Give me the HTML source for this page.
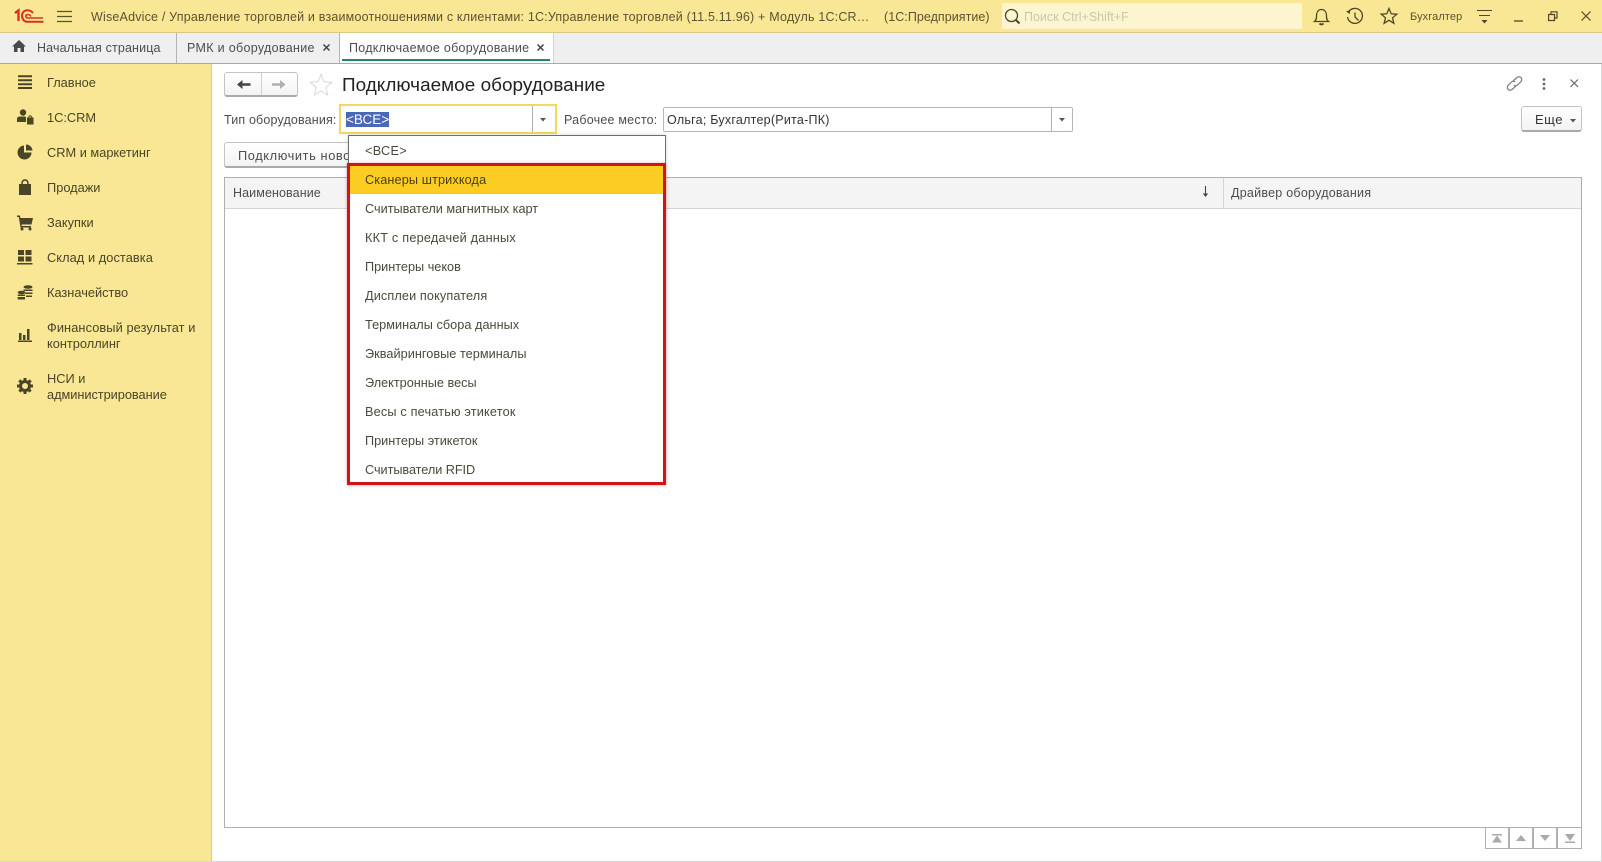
<!DOCTYPE html>
<html lang="ru"><head><meta charset="utf-8"><title>Подключаемое оборудование</title>
<style>
html,body{margin:0;padding:0;width:1602px;height:862px;overflow:hidden;background:#fff;font-family:"Liberation Sans","Noto Sans CJK SC",sans-serif;font-size:13px;color:#4d4d4d}
.a{position:absolute}
.t{position:absolute;white-space:nowrap;line-height:16px}
svg{position:absolute;overflow:visible}
.s{color:#4a4526;font-size:12.800px}
.it{position:absolute;left:365px;white-space:nowrap;line-height:16px;color:#4a4a3a;font-size:12.700px}
.btn{position:absolute;background:linear-gradient(#fff,#f3f3f3);border:1px solid #c4c4c4;border-bottom:2px solid #aaa;border-radius:3px;box-sizing:border-box}
.pg{position:absolute;top:827px;width:24px;height:22px;box-sizing:border-box;border:1px solid #b0b0b0}
</style></head><body>

<!-- title bar -->
<div class="a" style="left:0;top:0;width:1602px;height:32px;background:#f9e795;border-bottom:1px solid #d8c98a"></div>
<svg style="left:14px;top:9px" width="30" height="15" viewBox="0 0 30 15"><g fill="none" stroke="#d6331e"><path d="M1 4 4.500 1.500V12" stroke-width="2.400"/><path d="M19 4C17.500 2.200 15.800 1.200 13.500 1.200 10 1.200 8 3.800 8 6.800S10 12.800 13.500 12.800H29.500" stroke-width="2"/><path d="M17 7.500C16.300 6.300 15.200 5.500 13.800 5.500 12.500 5.500 11.800 6.200 11.800 7S12.500 9 13.800 9H29" stroke-width="1.600"/></g></svg>
<svg style="left:57px;top:10px" width="15" height="13"><path d="M0 1.500H15M0 6.500H15M0 11.500H15" stroke="#5a5330" stroke-width="1.200"/></svg>
<div class="t" style="left:91px;top:9px;color:#5b5431;font-size:12.500px;letter-spacing:.19px">WiseAdvice / Управление торговлей и взаимоотношениями с клиентами: 1С:Управление торговлей (11.5.11.96) + Модуль 1С:CR…</div>
<div class="t" style="left:884px;top:9px;color:#5b5431;font-size:12.500px;letter-spacing:.05px">(1С:Предприятие)</div>
<div class="a" style="left:1002px;top:3px;width:300px;height:26px;background:#fdf5cf"></div>
<svg style="left:1004px;top:8px" width="17" height="18" fill="none" stroke="#4b4630" stroke-width="1.300"><circle cx="7.500" cy="7.500" r="6"/><path d="M12 12l3.500 3.500" stroke-width="2"/></svg>
<div class="t" style="left:1024px;top:9px;color:#c9c6b2;font-size:12.500px">Поиск Ctrl+Shift+F</div>
<svg style="left:1313px;top:7px" width="17" height="19" fill="none" stroke="#4f4823" stroke-width="1.300"><path d="M1.500 14.500C3.500 13 3.500 11 3.500 9 3.500 5.500 5 2.500 8.500 2.500S13.500 5.500 13.500 9C13.500 11 13.500 13 15.500 14.500Z"/><path d="M6.500 16.500Q8.500 18.500 10.500 16.500" stroke-width="1.800"/></svg>
<svg style="left:1345px;top:7px" width="19" height="19" fill="none" stroke="#4f4823" stroke-width="1.300"><path d="M3.500 5A7.500 7.500 0 1 1 2.500 10"/><path d="M1 4.500 5 3 5 7Z" fill="#4f4823" stroke="none"/><path d="M10 5.500V10L13.500 13.500"/></svg>
<svg style="left:1380px;top:7px" width="18" height="18" fill="none" stroke="#4f4823" stroke-width="1.300"><path d="M9 1.500 11.200 6.800 16.800 7.200 12.500 10.800 13.900 16.300 9 13.300 4.100 16.300 5.500 10.800 1.200 7.200 6.800 6.800Z"/></svg>
<div class="t" style="left:1410px;top:9px;color:#5b5431;font-size:11px;letter-spacing:.1px">Бухгалтер</div>
<svg style="left:1477px;top:10px" width="15" height="15" fill="none" stroke="#4f4823" stroke-width="1.100"><path d="M0 .5H15M2 5.500H13"/><path d="M4.500 10H10.500L7.500 13.500Z" fill="#4f4823" stroke="none"/></svg>
<svg style="left:1514px;top:20px" width="9" height="2"><path d="M0 1H9" stroke="#4f4823" stroke-width="1.300"/></svg>
<svg style="left:1548px;top:11px" width="10" height="11" fill="none" stroke="#4f4823" stroke-width="1.200"><path d="M.6 3.500H6.500V9.500H.6ZM3 3.500V.8H9V7H6.500"/></svg>
<svg style="left:1581px;top:11px" width="10" height="10"><path d="M.5.500 9.500 9.500M9.500.500.500 9.500" stroke="#4f4823" stroke-width="1.200"/></svg>

<!-- tabs -->
<div class="a" style="left:0;top:33px;width:1602px;height:30px;background:#efefef;border-bottom:1px solid #a9a9a9"></div>
<div class="a" style="left:176px;top:33px;width:1px;height:30px;background:#b5b5b5"></div>
<div class="a" style="left:339px;top:33px;width:215px;height:30px;background:#fff;border-left:1px solid #b5b5b5;border-right:1px solid #d4d4d4;box-sizing:border-box"></div>
<div class="a" style="left:342px;top:59px;width:208px;height:2px;background:#1f8a66"></div>
<svg style="left:12px;top:40px" width="14" height="12"><path d="M7 0 14 6.500H12V12H8.500V8H5.500V12H2V6.500H0Z" fill="#4a4a4a"/></svg>
<div class="t" style="left:37px;top:40px;font-size:12.500px;letter-spacing:.15px">Начальная страница</div>
<div class="t" style="left:187px;top:40px;font-size:12.500px;letter-spacing:.32px">РМК и оборудование</div>
<svg style="left:323px;top:44px" width="7" height="7"><path d="M.5.500 6.500 6.500M6.500.500.500 6.500" stroke="#444" stroke-width="1.500"/></svg>
<div class="t" style="left:349px;top:40px;font-size:12.500px;letter-spacing:.27px">Подключаемое оборудование</div>
<svg style="left:537px;top:44px" width="7" height="7"><path d="M.5.500 6.500 6.500M6.500.500.500 6.500" stroke="#444" stroke-width="1.500"/></svg>

<!-- sidebar -->
<div class="a" style="left:0;top:64px;width:212px;height:798px;background:#f9e795;border-right:1px solid #d8cc8c;box-sizing:border-box"></div>
<svg style="left:17px;top:75px" width="16" height="14"><path d="M1 1.200H15M1 5.200H15M1 9.200H15M1 13H15" stroke="#4a4526" stroke-width="2"/></svg>
<svg style="left:17px;top:109px" width="17" height="16" fill="#4a4526"><circle cx="6" cy="3.500" r="3.200"/><path d="M0 13V10Q0 7.500 3 7.500H8Q9 7.500 9 9V13Z"/><path d="M10 8.500H16.500V15.500H10Z"/><path d="M11.500 8.500Q13 5 15 8.500" fill="none" stroke="#4a4526"/></svg>
<svg style="left:17px;top:144px" width="16" height="16" fill="#4a4526"><path d="M7 1.500V8.500H14.500A7 7 0 1 1 7 1.500Z"/><path d="M9 .5A6.500 6.500 0 0 1 15.500 6.500H9Z"/></svg>
<svg style="left:18px;top:179px" width="14" height="16" fill="#4a4526"><path d="M1 5H13V16H1Z"/><path d="M4 5Q4 1 7 1T10 5" fill="none" stroke="#4a4526" stroke-width="1.500"/></svg>
<svg style="left:17px;top:215px" width="16" height="15" fill="#4a4526"><path d="M0 .5H3L3.500 3H16L14.500 9.500H4.500L4.800 11H14V12.500H3.500L1.800 2H0Z"/><circle cx="5" cy="14" r="1.500"/><circle cx="13" cy="14" r="1.500"/></svg>
<svg style="left:17px;top:250px" width="16" height="15" fill="#4a4526"><path d="M1 0H7V5H1ZM8.500 0H14.500V5H8.500ZM1 6.500H7V11.500H1ZM8.500 6.500H14.500V11.500H8.500ZM0 13H15.500V14.500H0Z"/></svg>
<svg style="left:17px;top:285px" width="16" height="15" fill="#4a4526"><ellipse cx="11" cy="2" rx="4.500" ry="1.800"/><path d="M6.500 4.500H15.500V6H6.500ZM8 7.500H15.500V9H8ZM9 10.500H15V12H9Z"/><ellipse cx="4.500" cy="7.500" rx="3.800" ry="1.700"/><path d="M.700 9.500H8V11H.700ZM.700 12H8V14.500H.700Z"/></svg>
<svg style="left:18px;top:329px" width="14" height="13" fill="#4a4526"><path d="M1 4H3.500V11H1ZM5 6H7.500V11H5ZM9 0H11.500V11H9ZM0 11.500H14V13H0Z"/></svg>
<svg style="left:17px;top:378px" width="16" height="16"><circle cx="8" cy="8" r="4.500" fill="none" stroke="#4a4526" stroke-width="3"/><path d="M8 0V16M0 8H16M2.300 2.300 13.700 13.700M13.700 2.300 2.300 13.700" stroke="#4a4526" stroke-width="3" stroke-dasharray="2.500 11 2.500"/></svg>
<div class="t s" style="left:47px;top:75px">Главное</div>
<div class="t s" style="left:47px;top:110px">1С:CRM</div>
<div class="t s" style="left:47px;top:145px">CRM и маркетинг</div>
<div class="t s" style="left:47px;top:180px">Продажи</div>
<div class="t s" style="left:47px;top:215px">Закупки</div>
<div class="t s" style="left:47px;top:250px;letter-spacing:.06px">Склад и доставка</div>
<div class="t s" style="left:47px;top:285px">Казначейство</div>
<div class="t s" style="left:47px;top:320px;letter-spacing:.09px">Финансовый результат и</div>
<div class="t s" style="left:47px;top:336px">контроллинг</div>
<div class="t s" style="left:47px;top:371px">НСИ и</div>
<div class="t s" style="left:47px;top:387px;letter-spacing:-.05px">администрирование</div>

<!-- form header -->
<div class="btn" style="left:224px;top:72px;width:74px;height:25px"></div>
<div class="a" style="left:261px;top:73px;width:1px;height:22px;background:#d0d0d0"></div>
<svg style="left:236px;top:79px" width="15" height="11"><path d="M1 5.500 6.500 1V4.300H14.500V6.700H6.500V10Z" fill="#444"/></svg>
<svg style="left:271px;top:79px" width="15" height="11"><path d="M14.500 5.500 9 1V4.300H1V6.700H9V10Z" fill="#b0b0b0"/></svg>
<svg style="left:309px;top:73px" width="24" height="23"><path d="M12 1.500 15 8.800 22.800 9.300 16.800 14.300 18.700 22 12 17.800 5.300 22 7.200 14.300 1.200 9.300 9 8.800Z" fill="#fff" stroke="#d8d8d8" stroke-width="1"/></svg>
<div class="t" style="left:342px;top:75px;font-size:18.900px;line-height:22px;color:#222;letter-spacing:.04px">Подключаемое оборудование</div>
<svg style="left:1506px;top:75px" width="17" height="17" fill="none" stroke="#7d7d7d" stroke-width="1.200"><path d="M7 6 11 2.500Q13 1 14.800 2.500T15 6.500L11.500 10Q9.500 11.500 8 10"/><path d="M10 11 6 14.500Q4 16 2.300 14.500T2 10.500L5.500 7Q7.500 5.500 9 7"/></svg>
<svg style="left:1542px;top:78px" width="4" height="12" fill="#666"><circle cx="2" cy="1.500" r="1.400"/><circle cx="2" cy="6" r="1.400"/><circle cx="2" cy="10.500" r="1.400"/></svg>
<svg style="left:1570px;top:79px" width="9" height="9"><path d="M.5.500 8 8M8 .5.500 8" stroke="#666" stroke-width="1.200"/></svg>

<!-- filters -->
<div class="t" style="left:224px;top:112px;letter-spacing:.16px;font-size:12.500px">Тип оборудования:</div>
<div class="a" style="left:339px;top:104px;width:218px;height:30px;border:2px solid #f5d75e;box-sizing:border-box;background:#fff"></div>
<div class="a" style="left:532px;top:106px;width:1px;height:26px;background:#b0b0b0"></div>
<svg style="left:540px;top:118px" width="6" height="4"><path d="M0 0H6L3 3.500Z" fill="#555"/></svg>
<div class="a" style="left:346px;top:112px;width:43px;height:15px;background:#4a68b8"></div>
<div class="t" style="left:346px;top:112px;color:#fff;font-size:13.500px">&lt;ВСЕ&gt;</div>
<div class="t" style="left:564px;top:112px;letter-spacing:.22px;font-size:12.500px">Рабочее место:</div>
<div class="a" style="left:663px;top:107px;width:410px;height:25px;border:1px solid #b5b5b5;border-radius:2px;box-sizing:border-box;background:#fff"></div>
<div class="a" style="left:1051px;top:108px;width:1px;height:23px;background:#b0b0b0"></div>
<svg style="left:1059px;top:118px" width="6" height="4"><path d="M0 0H6L3 3.500Z" fill="#555"/></svg>
<div class="t" style="left:667px;top:112px;color:#333;font-size:12.500px;letter-spacing:.24px">Ольга; Бухгалтер(Рита-ПК)</div>
<div class="btn" style="left:1521px;top:106px;width:61px;height:26px"></div>
<div class="t" style="left:1535px;top:112px;color:#333;letter-spacing:.5px">Еще</div>
<svg style="left:1570px;top:119px" width="6" height="4"><path d="M0 0H6L3 3.500Z" fill="#555"/></svg>
<div class="btn" style="left:224px;top:142px;width:140px;height:26px"></div>
<div class="t" style="left:238px;top:148px;letter-spacing:.6px;font-size:12.800px;width:110px;overflow:hidden">Подключить новое</div>

<!-- table -->
<div class="a" style="left:224px;top:177px;width:1358px;height:651px;border:1px solid #b0b0b0;box-sizing:border-box;background:#fff"></div>
<div class="a" style="left:225px;top:178px;width:1356px;height:31px;background:#f5f4f5;border-bottom:1px solid #d4d4d4;box-sizing:border-box"></div>
<div class="a" style="left:1223px;top:178px;width:1px;height:30px;background:#d4d4d4"></div>
<div class="t" style="left:233px;top:185px;letter-spacing:.1px;font-size:12.500px">Наименование</div>
<div class="t" style="left:1231px;top:185px;letter-spacing:.25px;font-size:12.500px">Драйвер оборудования</div>
<svg style="left:1202px;top:186px" width="7" height="12"><path d="M3.500 0V10" stroke="#444" stroke-width="1.100"/><path d="M.8 7.500H6.200L3.500 11Z" fill="#444"/></svg>

<!-- pager -->
<div class="pg" style="left:1485px"></div><div class="pg" style="left:1509px"></div><div class="pg" style="left:1533px"></div><div class="pg" style="left:1557px;width:25px"></div>
<svg style="left:1491px;top:834px" width="12" height="9" fill="#aaa"><path d="M1 0H11V1.500H1ZM6 1.500 11 8.500H1Z"/></svg>
<svg style="left:1516px;top:835px" width="10" height="6" fill="#aaa"><path d="M5 0 10 6H0Z"/></svg>
<svg style="left:1540px;top:835px" width="10" height="6" fill="#aaa"><path d="M0 0H10L5 6Z"/></svg>
<svg style="left:1564px;top:834px" width="12" height="9" fill="#aaa"><path d="M1 0H11L6 7ZM1 7.500H11V9H1Z"/></svg>
<div class="a" style="left:0;top:861px;width:1602px;height:1px;background:#d8d8d8"></div>
<div class="a" style="left:1601px;top:64px;width:1px;height:798px;background:#d8d8d8"></div>

<!-- dropdown -->
<div class="a" style="left:348px;top:135px;width:318px;height:350px;background:#fff;border:1px solid #6d6d6d;border-bottom:0;box-sizing:border-box;box-shadow:0 0 4px rgba(0,0,0,.15)"></div>
<div class="a" style="left:350px;top:166px;width:314px;height:28px;background:#fbcd23"></div>
<div class="a" style="left:347px;top:163px;width:319px;height:322px;border:3px solid #cf1518;box-sizing:border-box;box-shadow:0 0 3px rgba(220,60,60,.4)"></div>
<div class="it" style="top:143px;letter-spacing:.3px">&lt;ВСЕ&gt;</div>
<div class="it" style="top:172px;color:#4a3f14;letter-spacing:.12px">Сканеры штрихкода</div>
<div class="it" style="top:201px">Считыватели магнитных карт</div>
<div class="it" style="top:230px;letter-spacing:.22px">ККТ с передачей данных</div>
<div class="it" style="top:259px">Принтеры чеков</div>
<div class="it" style="top:288px;letter-spacing:.12px">Дисплеи покупателя</div>
<div class="it" style="top:317px;letter-spacing:.04px">Терминалы сбора данных</div>
<div class="it" style="top:346px;letter-spacing:.04px">Эквайринговые терминалы</div>
<div class="it" style="top:375px">Электронные весы</div>
<div class="it" style="top:404px;letter-spacing:.18px">Весы с печатью этикеток</div>
<div class="it" style="top:433px">Принтеры этикеток</div>
<div class="it" style="top:462px;letter-spacing:-.05px">Считыватели RFID</div>
</body></html>
